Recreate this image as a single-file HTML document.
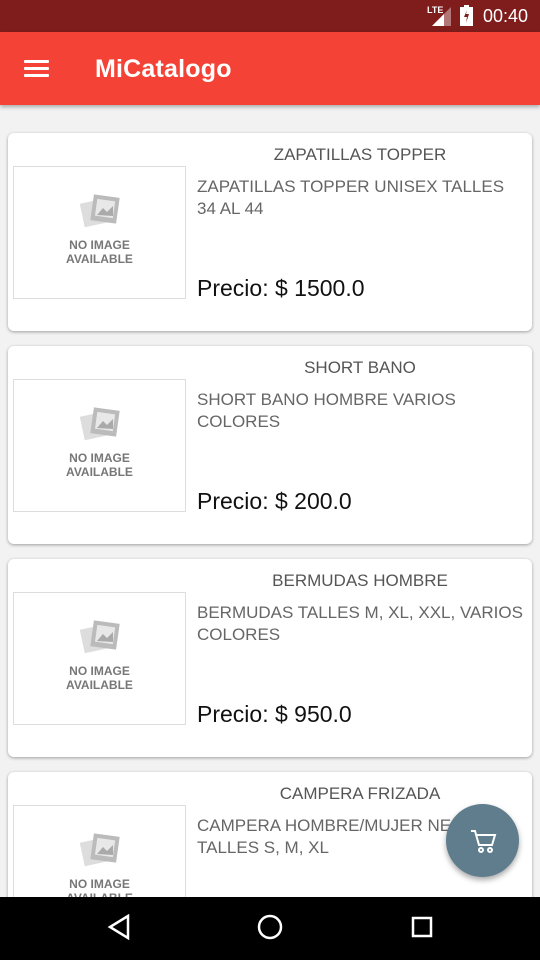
<!DOCTYPE html>
<html><head><meta charset="utf-8"><style>
*{margin:0;padding:0;box-sizing:border-box}
html,body{width:540px;height:960px;overflow:hidden}
body{background:#f2f2f2;font-family:"Liberation Sans",Roboto,sans-serif;position:relative}
.sb{position:absolute;top:0;left:0;width:540px;height:32px;background:#7f1c1c;color:#fff}
.ab{position:absolute;top:32px;left:0;width:540px;height:73px;background:#f44336;box-shadow:0 2px 4px rgba(0,0,0,.3);z-index:2}
.ab .t{position:absolute;left:95px;top:23px;font-size:25px;color:#fff;font-weight:bold;letter-spacing:.2px}
.ham{position:absolute;left:24px;width:25px;height:3px;background:#fff;border-radius:1px}
.card{position:absolute;left:8px;width:524px;height:198px;background:#fff;border-radius:6px;box-shadow:0 1px 3px rgba(0,0,0,.35)}
.img{position:absolute;left:5px;top:33px;width:173px;height:133px;border:1px solid #ddd;background:#fff}
.img .ni{position:absolute;left:0;width:100%;top:71px;text-align:center;font-size:12px;font-weight:bold;color:#777;line-height:14px}
.pic{position:absolute;left:66px;top:26px}
.ti{position:absolute;left:180px;right:0;top:12px;text-align:center;font-size:17px;color:#555}
.de{position:absolute;left:189px;right:6px;top:43px;font-size:17px;color:#666;line-height:22px}
.pr{position:absolute;left:189px;top:142px;font-size:23px;color:#111}
.nav{position:absolute;top:897px;left:0;width:540px;height:63px;background:#000}
.fab{position:absolute;left:446px;top:804px;width:73px;height:73px;border-radius:50%;background:#5f7d8c;box-shadow:0 3px 6px rgba(0,0,0,.35)}
</style></head><body>
<div class="sb">
<span style="position:absolute;left:427px;top:5px;font-size:9px;font-weight:bold">LTE</span>
<svg style="position:absolute;left:432px;top:7px" width="19" height="19"><polygon points="0,19 19,19 19,0" fill="rgba(255,255,255,.4)"/><polygon points="0,19 12,19 12,7" fill="#fff"/></svg>
<svg style="position:absolute;left:460px;top:5px" width="13" height="21"><rect x="4" y="0" width="5" height="2" fill="#fff"/><rect x="0" y="2" width="13" height="19" fill="#fff"/><path d="M7 5 L4 12 H7 L6 18 L9 9 H6 Z" fill="#7f1c1c"/></svg>
<span style="position:absolute;left:483px;top:6px;font-size:18px">00:40</span>
</div>
<div class="ab"><div class="ham" style="top:28px"></div><div class="ham" style="top:35px"></div><div class="ham" style="top:42px"></div><div class="t">MiCatalogo</div></div>

<div class="card" style="top:133px"><div class="img"><svg class="pic" width="40" height="36"><rect x="2" y="8" width="24" height="24" fill="#ddd" transform="rotate(-12 14 20)"/><rect x="12" y="3" width="26" height="26" fill="#bbb" transform="rotate(8 25 16)"/><rect x="16" y="7" width="18" height="17" fill="#e8e8e8" transform="rotate(8 25 16)"/><path d="M17 22 L23 15 L27 19 L33 13 L33 23 Z" fill="#aaa"/></svg><div class="ni">NO IMAGE<br>AVAILABLE</div></div><div class="ti">ZAPATILLAS TOPPER</div><div class="de">ZAPATILLAS TOPPER UNISEX TALLES 34 AL 44</div><div class="pr">Precio: $ 1500.0</div></div>

<div class="card" style="top:346px"><div class="img"><svg class="pic" width="40" height="36"><rect x="2" y="8" width="24" height="24" fill="#ddd" transform="rotate(-12 14 20)"/><rect x="12" y="3" width="26" height="26" fill="#bbb" transform="rotate(8 25 16)"/><rect x="16" y="7" width="18" height="17" fill="#e8e8e8" transform="rotate(8 25 16)"/><path d="M17 22 L23 15 L27 19 L33 13 L33 23 Z" fill="#aaa"/></svg><div class="ni">NO IMAGE<br>AVAILABLE</div></div><div class="ti" style="left:180px">SHORT BANO</div><div class="de">SHORT BANO HOMBRE VARIOS COLORES</div><div class="pr">Precio: $ 200.0</div></div>

<div class="card" style="top:559px"><div class="img"><svg class="pic" width="40" height="36"><rect x="2" y="8" width="24" height="24" fill="#ddd" transform="rotate(-12 14 20)"/><rect x="12" y="3" width="26" height="26" fill="#bbb" transform="rotate(8 25 16)"/><rect x="16" y="7" width="18" height="17" fill="#e8e8e8" transform="rotate(8 25 16)"/><path d="M17 22 L23 15 L27 19 L33 13 L33 23 Z" fill="#aaa"/></svg><div class="ni">NO IMAGE<br>AVAILABLE</div></div><div class="ti">BERMUDAS HOMBRE</div><div class="de">BERMUDAS TALLES M, XL, XXL, VARIOS COLORES</div><div class="pr">Precio: $ 950.0</div></div>

<div class="card" style="top:772px"><div class="img"><svg class="pic" width="40" height="36"><rect x="2" y="8" width="24" height="24" fill="#ddd" transform="rotate(-12 14 20)"/><rect x="12" y="3" width="26" height="26" fill="#bbb" transform="rotate(8 25 16)"/><rect x="16" y="7" width="18" height="17" fill="#e8e8e8" transform="rotate(8 25 16)"/><path d="M17 22 L23 15 L27 19 L33 13 L33 23 Z" fill="#aaa"/></svg><div class="ni">NO IMAGE<br>AVAILABLE</div></div><div class="ti">CAMPERA FRIZADA</div><div class="de">CAMPERA HOMBRE/MUJER NEGRA TALLES S, M, XL</div><div class="pr">Precio: $ 1200.0</div></div>

<div class="fab"><svg style="position:absolute;left:24px;top:25px" width="28" height="26" fill="none" stroke="#fff" stroke-width="2"><path d="M1 2 H5 L9 16 H22 L25 6 H7"/><circle cx="11" cy="21" r="2"/><circle cx="20" cy="21" r="2"/></svg></div>

<div class="nav">
<svg style="position:absolute;left:107px;top:17px" width="24" height="26" fill="none" stroke="#fff" stroke-width="2.5"><path d="M21 2 L3 13 L21 24 Z"/></svg>
<svg style="position:absolute;left:257px;top:17px" width="26" height="26" fill="none" stroke="#fff" stroke-width="2.5"><circle cx="13" cy="13" r="11"/></svg>
<svg style="position:absolute;left:411px;top:19px" width="22" height="22" fill="none" stroke="#fff" stroke-width="2.5"><rect x="2" y="2" width="18" height="18"/></svg>
</div>
</body></html>
